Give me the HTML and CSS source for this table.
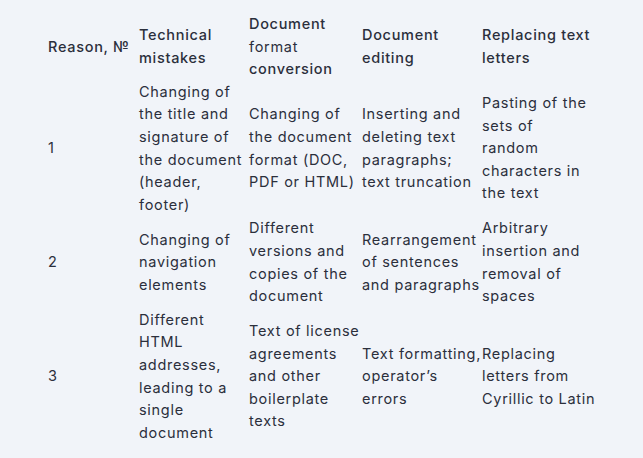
FILE: index.html
```html
<!DOCTYPE html>
<html lang="en">
<head>
<meta charset="utf-8">
<title>Reasons</title>
<link rel="stylesheet" href="styles.css">
</head>
<body>
<table class="reasons">
  <colgroup>
    <col class="c1"><col class="c2"><col class="c3"><col class="c4"><col class="c5">
  </colgroup>
  <thead>
    <tr>
      <th>Reason, №</th>
      <th>Technical<br>mistakes</th>
      <th>Document<br><span class="light">format</span><br>conversion</th>
      <th>Document<br>editing</th>
      <th>Replacing text<br>letters</th>
    </tr>
  </thead>
  <tbody>
    <tr>
      <td>1</td>
      <td>Changing of<br>the title and<br>signature of<br>the document<br>(header,<br>footer)</td>
      <td>Changing of<br>the document<br>format (DOC,<br>PDF or HTML)</td>
      <td>Inserting and<br>deleting text<br>paragraphs;<br>text truncation</td>
      <td>Pasting of the<br>sets of<br>random<br>characters in<br>the text</td>
    </tr>
    <tr>
      <td>2</td>
      <td>Changing of<br>navigation<br>elements</td>
      <td>Different<br>versions and<br>copies of the<br>document</td>
      <td>Rearrangement<br>of sentences<br>and paragraphs</td>
      <td>Arbitrary<br>insertion and<br>removal of<br>spaces</td>
    </tr>
    <tr>
      <td>3</td>
      <td>Different<br>HTML<br>addresses,<br>leading to a<br>single<br>document</td>
      <td>Text of license<br>agreements<br>and other<br>boilerplate<br>texts</td>
      <td>Text formatting,<br>operator’s<br>errors</td>
      <td>Replacing<br>letters from<br>Cyrillic to Latin</td>
    </tr>
  </tbody>
</table>
</body>
</html>
```
FILE: styles.css
```css
html, body {
  margin: 0;
  background: #f1f4f9;
}
body {
  padding: 13px 0 0 48px;
  font-family: Inter, "Open Sans", sans-serif;
  font-size: 14.5px;
  letter-spacing: 0.7px;
  color: #2b2f3c;
}
.reasons {
  border-collapse: collapse;
  table-layout: fixed;
  width: 556px;
}
.c1 { width: 91px; }
.c2 { width: 110px; }
.c3 { width: 113px; }
.c4 { width: 120px; }
.c5 { width: 122px; }
.reasons th,
.reasons td {
  padding: 0;
  line-height: 22.6px;
  text-align: left;
  vertical-align: middle;
  white-space: nowrap;
}
.reasons td {
  padding-bottom: 1px;
}
.reasons th {
  font-weight: 550;
}
.reasons th .light {
  font-weight: 400;
}
```
